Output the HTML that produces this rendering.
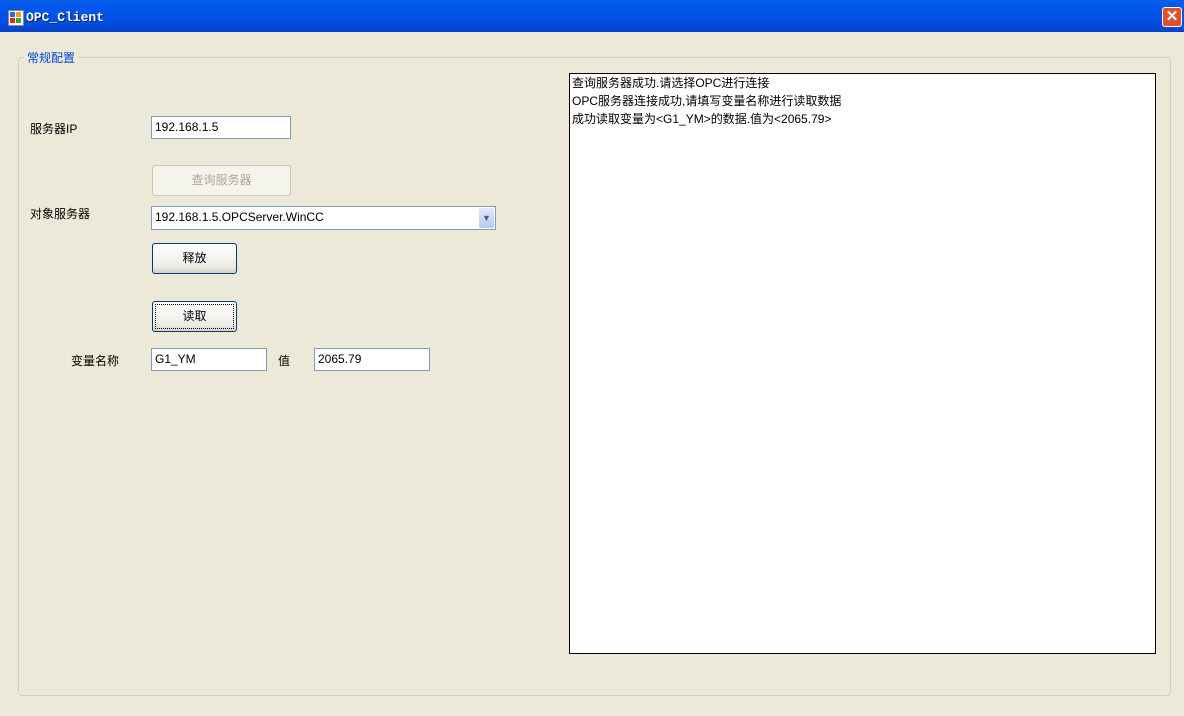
<!DOCTYPE html>
<html><head><meta charset="utf-8"><style>
body{margin:0;width:1184px;height:716px;overflow:hidden;background:#ECE9D8;font-family:"Liberation Sans","Noto Sans CJK SC",sans-serif;font-size:12px;position:relative}
.a{position:absolute}
.title{left:0;top:0;width:1184px;height:32px;background:linear-gradient(#0A5FE8,#0058EE 20%,#0250E0 70%,#0840C8)}
.tb{border:1px solid #7F9DB9;background:#fff;box-sizing:border-box;padding:2px 3px;font-size:12px;line-height:16px}
.btn{box-sizing:border-box;border:1px solid #003C74;border-radius:3px;background:linear-gradient(#fff,#ECEBE6 80%,#D6D0C5);text-align:center;line-height:26px;color:#000}
</style></head><body>
<div class="a title"></div>
<div class="a" style="left:8px;top:10px;width:14px;height:14px;background:#fff;border:1px solid #888"><div class="a" style="left:1px;top:1px;width:5px;height:5px;background:#2a6fd8"></div><div class="a" style="left:7px;top:1px;width:5px;height:5px;background:#e8a020"></div><div class="a" style="left:1px;top:7px;width:5px;height:5px;background:#d03020"></div><div class="a" style="left:7px;top:7px;width:5px;height:5px;background:#3aa040"></div></div>
<div class="a" style="left:26px;top:10px;color:#fff;font-family:'Liberation Mono',monospace;font-weight:bold;font-size:13px;text-shadow:1px 1px #0a1870">OPC_Client</div>
<div class="a" style="left:1162px;top:7px;width:20px;height:20px;border:1px solid #fff;border-radius:3px;background:#E0522F;box-sizing:border-box;color:#fff;font-weight:bold;text-align:center;line-height:18px;font-size:15px">✕</div>
<div class="a" style="left:18px;top:57px;width:1153px;height:639px;border:1px solid #D0D0BF;border-radius:4px;box-sizing:border-box"></div>
<div class="a" style="left:24px;top:49px;background:#ECE9D8;color:#0046D5;padding:0 3px">常规配置</div>
<div class="a" style="left:30px;top:120px">服务器IP</div>
<div class="a tb" style="left:151px;top:116px;width:140px;height:23px">192.168.1.5</div>
<div class="a btn" style="left:152px;top:165px;width:139px;height:31px;border-color:#C9C7BA;color:#ACA899;background:#F5F4EA;line-height:29px">查询服务器</div>
<div class="a" style="left:30px;top:205px">对象服务器</div>
<div class="a tb" style="left:151px;top:206px;width:345px;height:24px">192.168.1.5.OPCServer.WinCC</div>
<div class="a" style="left:479px;top:208px;width:15px;height:20px;background:linear-gradient(#dfe8fd,#b6c9f4);border-radius:2px;color:#4d6185;font-size:9px;text-align:center;line-height:20px">▼</div>
<div class="a btn" style="left:152px;top:243px;width:85px;height:31px;line-height:29px">释放</div>
<div class="a btn" style="left:152px;top:301px;width:85px;height:31px;line-height:29px;outline:1px dotted #000;outline-offset:-4px">读取</div>
<div class="a" style="left:71px;top:352px">变量名称</div>
<div class="a tb" style="left:151px;top:348px;width:116px;height:23px">G1_YM</div>
<div class="a" style="left:278px;top:352px">值</div>
<div class="a tb" style="left:314px;top:348px;width:116px;height:23px">2065.79</div>
<div class="a" style="left:569px;top:73px;width:587px;height:581px;border:1px solid #000;background:#fff;box-sizing:border-box;padding:0 2px;line-height:18px">查询服务器成功.请选择OPC进行连接<br>OPC服务器连接成功,请填写变量名称进行读取数据<br>成功读取变量为&lt;G1_YM&gt;的数据.值为&lt;2065.79&gt;</div>
</body></html>
